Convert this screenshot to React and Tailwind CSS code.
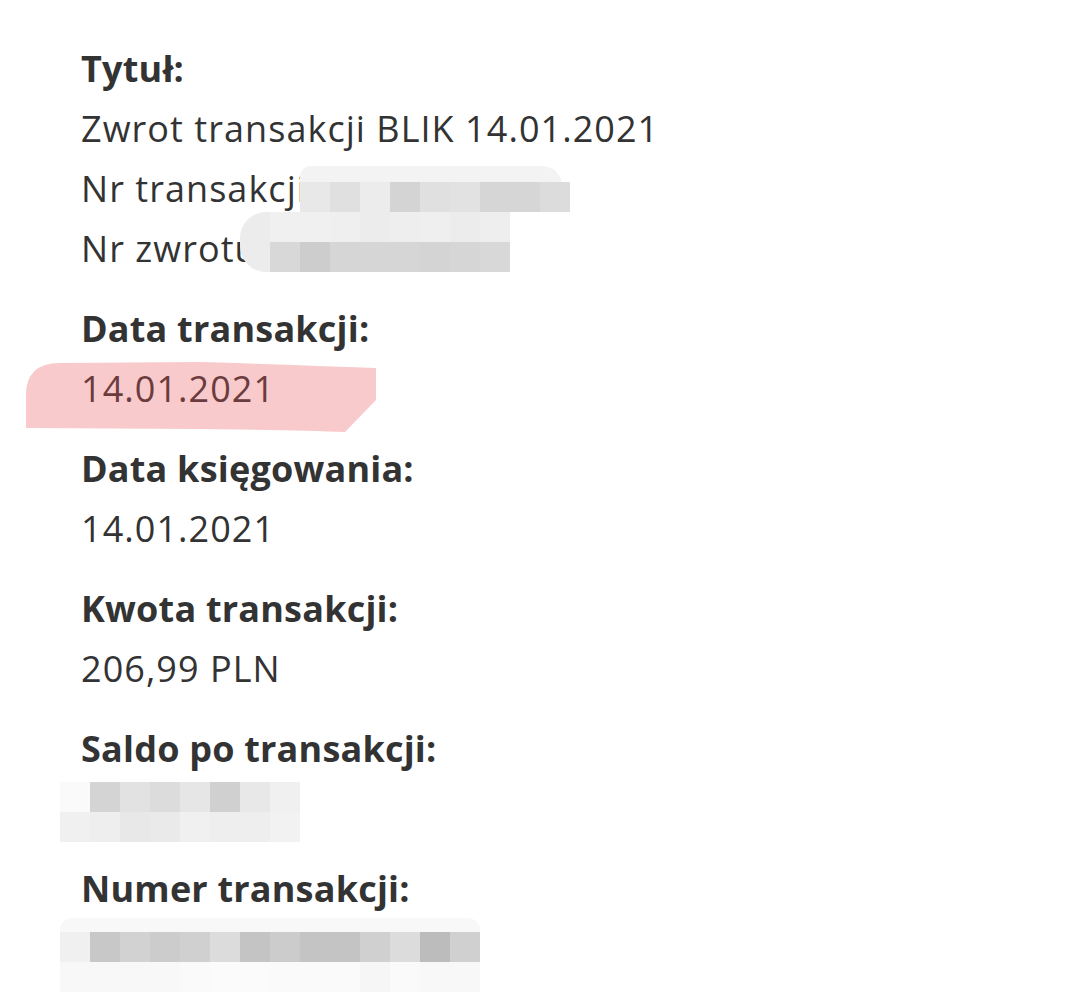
import React from "react";

const Cells = ({ top, left, colors, h = 30, w = 30, className = "" }) => (
  <div className={"absolute flex " + className} style={{ top, left, height: h }}>
    {colors.map((c, i) => (
      <div key={i} style={{ width: w, height: h, background: c }} />
    ))}
  </div>
);

const Group = ({ label, children }) => (
  <div className="mb-[20px]">
    <div className="font-bold h-[60px] leading-[60px] tracking-[0.2px]">{label}</div>
    {children}
  </div>
);

const Line = ({ children, className = "" }) => (
  <div className={"h-[60px] leading-[60px] whitespace-nowrap tracking-[1.05px] " + className}>{children}</div>
);

export default function App() {
  return (
    <div
      className="relative w-[1080px] h-[1001px] bg-white overflow-hidden text-[#333333]"
      style={{ fontFamily: '"Open Sans", "Noto Sans", sans-serif' }}
    >
      {/* highlighter stroke */}
      <svg className="absolute left-0 top-0" width="1080" height="1001" viewBox="0 0 1080 1001">
        <path
          d="M26,428 L26,395 Q26,363 60,363 L200,362 Q300,365 376,368 L376,400 L345,432 Q300,430 200,429 Z"
          fill="#f9cacb"
        />
      </svg>

      <div className="relative pl-[81px] pt-[39px] text-[36px]">
        <Group label="Tytuł:">
          <Line>Zwrot transakcji BLIK 14.01.2021</Line>
          <Line>Nr transakcji: 1234567890</Line>
          <Line>Nr zwrotu: 12345678</Line>
        </Group>
        <Group label="Data transakcji:">
          <Line className="text-[#6b3c3e]">14.01.2021</Line>
        </Group>
        <Group label="Data księgowania:">
          <Line>14.01.2021</Line>
        </Group>
        <Group label="Kwota transakcji:">
          <Line>206,99 PLN</Line>
        </Group>
        <Group label="Saldo po transakcji:">
          <Line>1 234,56</Line>
        </Group>
        <Group label="Numer transakcji:">
          <Line>12345678901234567</Line>
        </Group>
      </div>

      {/* redaction: Nr transakcji */}
      <div className="absolute left-[300px] top-[166px] w-[262px] h-[20px] bg-[#f3f3f3] rounded-tl-[14px] rounded-tr-[26px]" />
      <Cells top={182} left={300} colors={["#e8e8e8", "#e0e0e0", "#ececec", "#d4d4d4", "#e0e0e0", "#e2e2e2", "#d6d6d6", "#d6d6d6", "#dcdcdc"]} />
      <div className="absolute left-[240px] top-[212px] w-[40px] h-[60px] bg-[#ececec] rounded-l-[26px]" />
      <Cells top={212} left={270} colors={["#f0f0f0", "#f0f0f0", "#efefef", "#ececec", "#eeeeee", "#efefef", "#ececec", "#eeeeee"]} />
      <Cells top={242} left={270} colors={["#d8d8d8", "#cdcdcd", "#d6d6d6", "#d6d6d6", "#d6d6d6", "#d4d4d4", "#d6d6d6", "#d8d8d8"]} />

      {/* redaction: Saldo */}
      <Cells top={782} left={60} colors={["#fafafa", "#d4d4d4", "#e2e2e2", "#dcdcdc", "#e6e6e6", "#d0d0d0", "#e8e8e8", "#f0f0f0"]} />
      <Cells top={812} left={60} colors={["#f0f0f0", "#eeeeee", "#e8e8e8", "#eaeaea", "#f0f0f0", "#eeeeee", "#eeeeee", "#f2f2f2"]} />

      {/* redaction: Numer */}
      <div className="absolute left-[60px] top-[918px] w-[420px] h-[16px] bg-[#f8f8f8] rounded-t-[12px]" />
      <Cells top={932} left={60} colors={["#f0f0f0", "#c8c8c8", "#d2d2d2", "#cccccc", "#d0d0d0", "#dcdcdc", "#c4c4c4", "#cccccc", "#c4c4c4", "#c4c4c4", "#d0d0d0", "#dcdcdc", "#bcbcbc", "#d0d0d0"]} />
      <Cells top={962} left={60} colors={["#f8f8f8", "#f8f8f8", "#f8f8f8", "#f8f8f8", "#fafafa", "#fbfbfb", "#fbfbfb", "#fafafa", "#fafafa", "#fafafa", "#f6f6f6", "#fafafa", "#f8f8f8", "#f8f8f8"]} />
    </div>
  );
}
